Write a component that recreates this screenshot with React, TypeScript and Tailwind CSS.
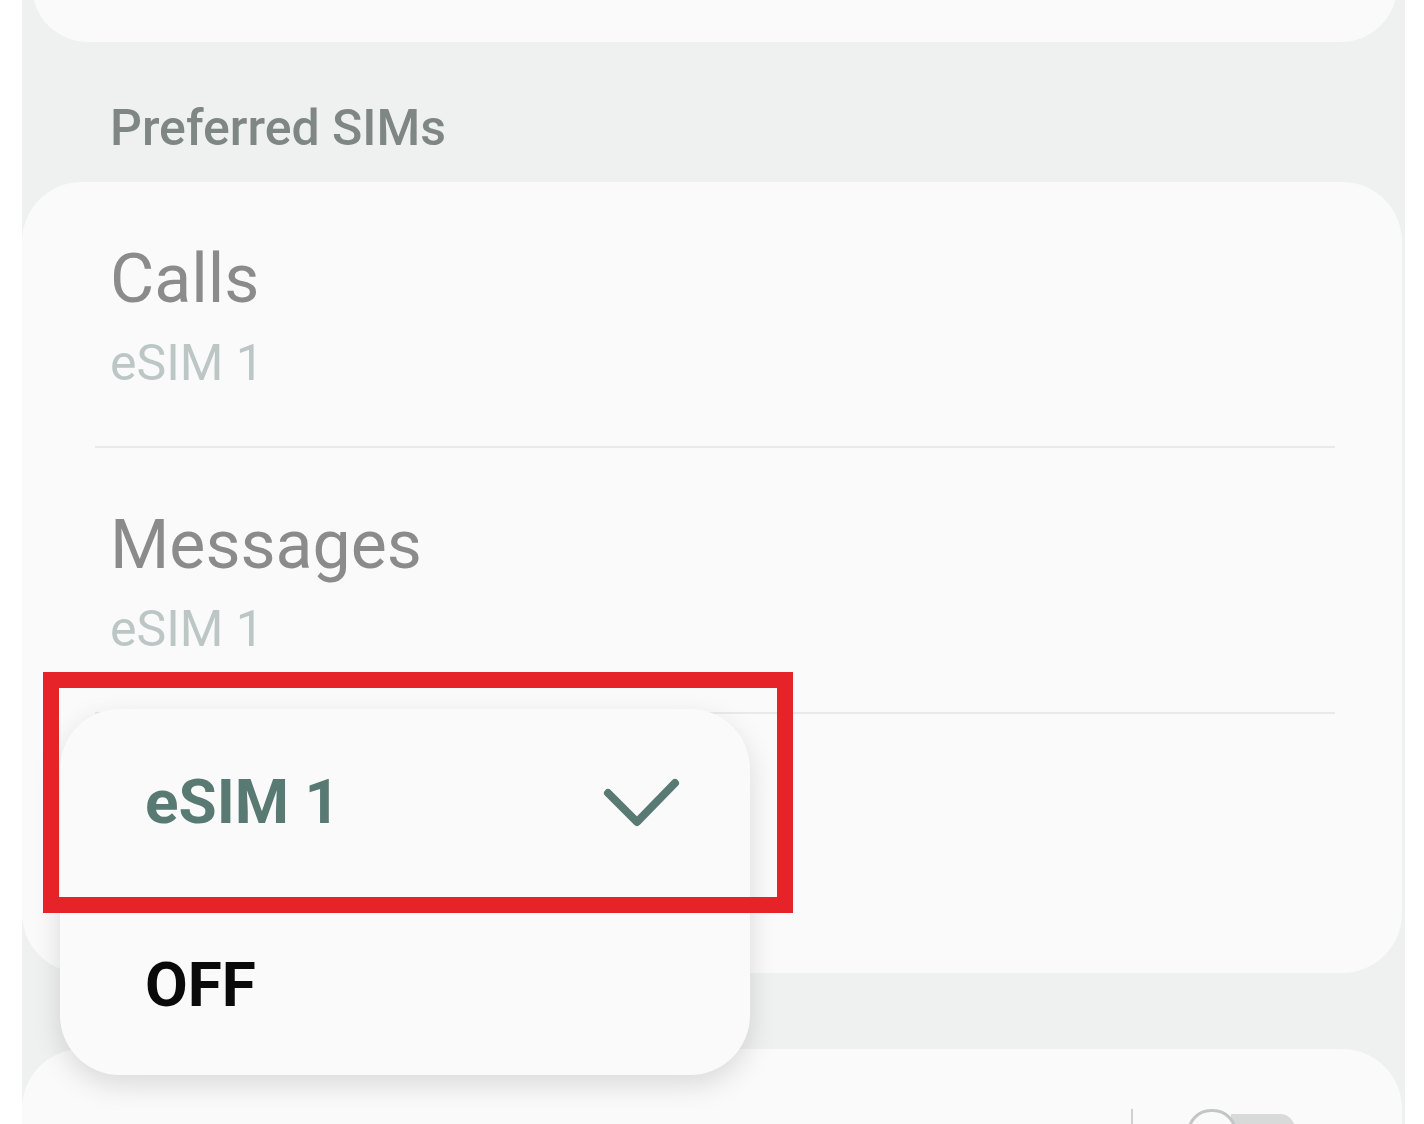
import React from 'react';

interface SimRowProps {
  title?: string;
  value?: string;
  divider?: boolean;
  bottom?: number;
}

const font = { fontFamily: 'Roboto, "Noto Sans", Arial, sans-serif' };

const SimRow: React.FC<SimRowProps> = ({ title, value, divider }) => (
  <div>
    <div className="pl-[88px] pt-[63px] pb-[58px]">
      <div className="text-[68px] leading-none text-[#8b8b8b]">{title}</div>
      <div className="mt-[25px] text-[50px] leading-none text-[#bcc7c5]">{value}</div>
    </div>
    {divider && <div className="ml-[73px] mr-[67px] h-[2px] bg-[#e8eaea]" />}
  </div>
);

const App: React.FC = () => {
  return (
    <div className="relative h-[1124px] w-[1424px] overflow-hidden bg-white" style={font}>
      <div className="ml-[22px] flex h-full w-[1383px] flex-col bg-[#eff0f0]">
        {/* card cut off at the top */}
        <div className="-mt-[80px] ml-[10px] mr-[8px] h-[122px] shrink-0 rounded-[56px] bg-[#fafafa]" />

        <div className="pl-[88px] pt-[61px] pb-[29px] text-[50px] font-medium leading-none text-[#7f8785]">
          Preferred SIMs
        </div>

        <div className="mr-[3px] shrink-0 rounded-[60px] bg-[#fafafa]">
          <SimRow title="Calls" value="eSIM 1" divider />
          <SimRow title="Messages" value="eSIM 1" divider />
          {/* third row sits under the open menu */}
          <div className="h-[259px]" />
        </div>

        <div className="mt-[76px] mr-[3px] h-[200px] shrink-0 rounded-t-[60px] bg-[#fafafa] pt-[60px]">
          <div className="flex items-start justify-end pr-[107px]">
            <div className="mr-[54px] h-[40px] w-[2px] bg-[#cfd1d1]" />
            <div className="relative h-[44px] w-[108px]">
              <div className="absolute left-[44px] top-[5px] h-[30px] w-[64px] rounded-r-full bg-[#d8dada]" />
              <div className="absolute left-0 top-0 h-[48px] w-[50px] rounded-full border-[3px] border-[#c3c6c6] bg-[#fafafa]" />
            </div>
          </div>
        </div>
      </div>

      {/* dropdown menu */}
      <div className="absolute left-[60px] top-[709px] h-[366px] w-[690px] rounded-[60px] bg-[#fafafa] shadow-[0_10px_28px_rgba(0,0,0,0.13)]">
        <div className="flex items-start justify-between pl-[85px] pr-[70px] pt-[62px]">
          <span className="text-[62px] font-bold leading-none text-[#587a73]">eSIM 1</span>
          <svg width="80" height="50" viewBox="0 0 80 50" className="mt-[7px]">
            <path d="M8 15 L37 44 L75 5" fill="none" stroke="#587a73" strokeWidth="8" strokeLinecap="round" strokeLinejoin="round" />
          </svg>
        </div>
        <div className="pl-[85px] pt-[121px] text-[62px] font-bold leading-none text-[#0a0a0a]">OFF</div>
      </div>

      {/* annotation */}
      <div className="pointer-events-none absolute left-[43px] top-[672px] h-[241px] w-[750px] border-[16px] border-[#e52329]" />
    </div>
  );
};

export default App;
